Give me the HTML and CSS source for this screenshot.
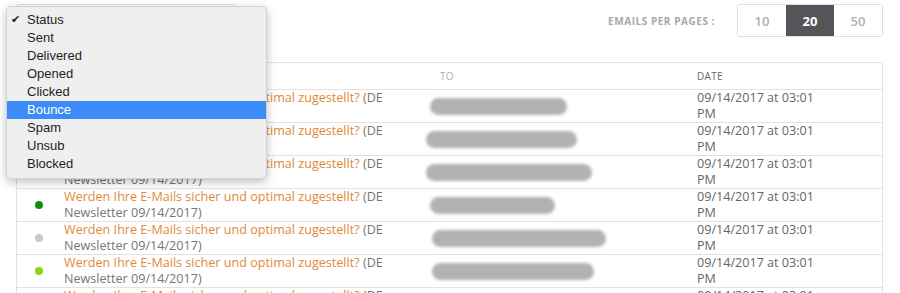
FILE: index.html
```html
<!DOCTYPE html>
<html lang="en">
<head>
    <meta charset="UTF-8">
    <title>Emails</title>
    <link rel="stylesheet" href="styles.css">
</head>
<body>
    <div class="page">
        <div class="topbar">
            <div class="filter">
                <div class="select-box"></div>
                <ul class="menu">
                    <li class="checked">Status</li>
                    <li>Sent</li>
                    <li>Delivered</li>
                    <li>Opened</li>
                    <li>Clicked</li>
                    <li class="active">Bounce</li>
                    <li>Spam</li>
                    <li>Unsub</li>
                    <li>Blocked</li>
                </ul>
            </div>
            <div class="per-page">
                <span class="per-label">Emails per pages :</span>
                <div class="btn-group">
                    <button class="pg-btn">10</button>
                    <button class="pg-btn selected">20</button>
                    <button class="pg-btn">50</button>
                </div>
            </div>
        </div>

        <div class="table">
            <div class="row head">
                <div></div>
                <div class="subject"></div>
                <div class="to">To</div>
                <div class="date">Date</div>
            </div>
            <div class="row">
                <div class="dot-cell"><span class="dot green"></span></div>
                <div class="subject"><a href="#">Werden Ihre E-Mails sicher und optimal zugestellt?</a> (DE<br>Newsletter 09/14/2017)</div>
                <div class="to"><span class="smudge" style="width:137px;margin-left:0"></span></div>
                <div class="date">09/14/2017 at 03:01<br>PM</div>
            </div>
            <div class="row">
                <div class="dot-cell"><span class="dot green"></span></div>
                <div class="subject"><a href="#">Werden Ihre E-Mails sicher und optimal zugestellt?</a> (DE<br>Newsletter 09/14/2017)</div>
                <div class="to"><span class="smudge" style="width:151px;margin-left:-4px"></span></div>
                <div class="date">09/14/2017 at 03:01<br>PM</div>
            </div>
            <div class="row">
                <div class="dot-cell"><span class="dot grey"></span></div>
                <div class="subject"><a href="#">Werden Ihre E-Mails sicher und optimal zugestellt?</a> (DE<br>Newsletter 09/14/2017)</div>
                <div class="to"><span class="smudge" style="width:166px;margin-left:-4px"></span></div>
                <div class="date">09/14/2017 at 03:01<br>PM</div>
            </div>
            <div class="row">
                <div class="dot-cell"><span class="dot green"></span></div>
                <div class="subject"><a href="#">Werden Ihre E-Mails sicher und optimal zugestellt?</a> (DE<br>Newsletter 09/14/2017)</div>
                <div class="to"><span class="smudge" style="width:125px;margin-left:0"></span></div>
                <div class="date">09/14/2017 at 03:01<br>PM</div>
            </div>
            <div class="row">
                <div class="dot-cell"><span class="dot grey"></span></div>
                <div class="subject"><a href="#">Werden Ihre E-Mails sicher und optimal zugestellt?</a> (DE<br>Newsletter 09/14/2017)</div>
                <div class="to"><span class="smudge" style="width:174px;margin-left:2px"></span></div>
                <div class="date">09/14/2017 at 03:01<br>PM</div>
            </div>
            <div class="row">
                <div class="dot-cell"><span class="dot lime"></span></div>
                <div class="subject"><a href="#">Werden Ihre E-Mails sicher und optimal zugestellt?</a> (DE<br>Newsletter 09/14/2017)</div>
                <div class="to"><span class="smudge" style="width:162px;margin-left:2px"></span></div>
                <div class="date">09/14/2017 at 03:01<br>PM</div>
            </div>
            <div class="row">
                <div class="dot-cell"><span class="dot green"></span></div>
                <div class="subject"><a href="#">Werden Ihre E-Mails sicher und optimal zugestellt?</a> (DE<br>Newsletter 09/14/2017)</div>
                <div class="to"><span class="smudge" style="width:150px;margin-left:0"></span></div>
                <div class="date">09/14/2017 at 03:01<br>PM</div>
            </div>
        </div>
    </div>
</body>
</html>
```

FILE: styles.css
```css
*{
    margin: 0;
    padding: 0;
    box-sizing: border-box;
}
body{
    background: #fff;
    font-family: "Open Sans", sans-serif;
    overflow: hidden;
}
.page{
    padding: 4px 17px 0 16px;
}
.topbar{
    display: flex;
    justify-content: space-between;
    align-items: center;
    height: 33px;
    margin-bottom: 25px;
}
.filter{
    position: relative;
}
.select-box{
    width: 220px;
    height: 33px;
    border: 1px solid #ddd;
    border-radius: 3px;
}
.menu{
    position: absolute;
    left: -10px;
    top: 2px;
    width: 261px;
    padding: 4px 0 5px;
    list-style: none;
    background: #efefef;
    border: 1px solid rgba(0, 0, 0, 0.12);
    border-radius: 5px;
    box-shadow: 0 3px 10px rgba(0, 0, 0, 0.25);
    font-family: "Liberation Sans", sans-serif;
    font-size: 13px;
    color: #1e1e1e;
    z-index: 5;
}
.menu li{
    height: 18px;
    line-height: 18px;
    padding-left: 20px;
    position: relative;
}
.menu li.checked::before{
    content: "\2714";
    position: absolute;
    left: 4px;
    font-family: "DejaVu Sans", sans-serif;
    font-size: 11px;
}
.menu li.active{
    background: #3c8bf6;
    color: #fff;
}
.per-page{
    display: flex;
    align-items: center;
    gap: 22px;
}
.per-label{
    font-size: 10px;
    font-weight: 700;
    text-transform: uppercase;
    color: #a8a8a8;
    letter-spacing: 0.55px;
}
.btn-group{
    display: flex;
    border: 1px solid #ddd;
    border-radius: 3px;
    overflow: hidden;
}
.pg-btn{
    width: 48px;
    height: 31px;
    border: none;
    background: #fff;
    font-family: "Open Sans", sans-serif;
    font-size: 13px;
    font-weight: 600;
    color: #b0b0b0;
}
.pg-btn.selected{
    background: #555559;
    color: #fff;
    font-weight: 700;
}
.table{
    border: 1px solid #e2e2e2;
    border-radius: 3px;
}
.row{
    display: grid;
    grid-template-columns: 43px 370px 260px 1fr;
    border-bottom: 1px solid #e2e2e2;
    min-height: 33px;
    font-size: 12.6px;
    line-height: 16px;
    color: #767676;
}
.row.head{
    min-height: 27px;
    align-items: center;
    font-size: 10px;
    text-transform: uppercase;
    color: #b0b0b0;
    letter-spacing: 0.3px;
}
.dot-cell{
    display: flex;
    align-items: center;
    justify-content: center;
}
.dot{
    width: 8px;
    height: 8px;
    border-radius: 50%;
}
.dot.green{
    background: #14900e;
}
.dot.grey{
    background: #c8c8c8;
}
.dot.lime{
    background: #8dd114;
}
.subject{
    padding-left: 4px;
}
.subject a{
    color: #e08a36;
    text-decoration: none;
}
.to{
    display: flex;
    align-items: center;
}
.head .to{
    padding-left: 10px;
}
.smudge{
    height: 17px;
    background: #b2b2b2;
    border-radius: 9px;
    filter: blur(1.5px);
}
.date{
    padding-left: 7px;
    color: #666;
}
```
